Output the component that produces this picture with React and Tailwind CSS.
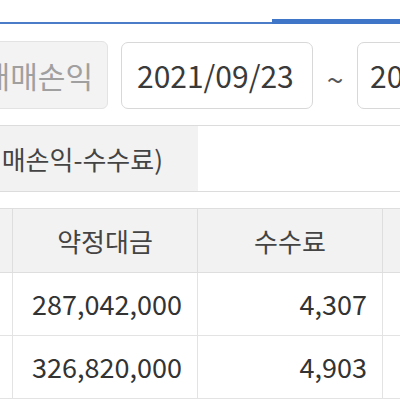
import React from "react";

const rows = [
  { amount: "287,042,000", fee: "4,307" },
  { amount: "326,820,000", fee: "4,903" },
];

const App = () => {
  return (
    <div
      className="w-[400px] h-[400px] overflow-hidden bg-white text-[#333]"
      style={{ fontFamily: '"Noto Sans CJK KR", "Noto Sans", sans-serif' }}
    >
      {/* Tabs */}
      <div className="flex h-[24px]">
        <div className="w-[272px] border-b-2 border-[#4a7cc8]" />
        <div className="flex-1 border-b-[5px] border-[#4076c7]" />
      </div>

      {/* Filter row */}
      <div className="mt-[17px] flex items-center h-[68px]">
        <button className="shrink-0 ml-[-40px] w-[148px] h-[68px] rounded-[6px] bg-[#f3f3f3] border border-[#e3e3e3] text-[30px] text-[#a0a0a0] flex items-center justify-end pr-[14px] whitespace-nowrap">
          매매손익
        </button>
        <div className="shrink-0 ml-[13px] w-[192px] h-[67px] rounded-[7px] border border-[#d8d8d8] flex items-center pl-[15px] text-[30px] text-[#3a3a3a]">
          2021/09/23
        </div>
        <div className="shrink-0 w-[44px] text-center text-[30px] leading-none pt-[6px] text-[#555]">~</div>
        <div className="shrink-0 w-[192px] h-[67px] rounded-[7px] border border-[#d8d8d8] flex items-center pl-[12px] text-[30px] text-[#3a3a3a]">
          2021/09/30
        </div>
      </div>

      {/* Formula row */}
      <div className="mt-[16px] flex h-[67px] border-y border-[#dcdcdc]">
        <div className="w-[198px] bg-[#f2f2f2] flex items-center justify-end pr-[35px] overflow-hidden whitespace-nowrap text-[26px] text-[#444]">
          (매매손익-수수료)
        </div>
        <div className="flex-1 bg-white" />
      </div>

      {/* Table */}
      <div className="mt-[16px] border-t border-[#dedede]">
        <div className="grid grid-cols-[13px_185px_185px_1fr] h-[64px] bg-[#f2f2f2] border-b border-[#dedede] text-[26px] text-[#444]">
          <div className="border-r border-[#dedede]" />
          <div className="border-r border-[#dedede] flex items-center justify-center">약정대금</div>
          <div className="border-r border-[#dedede] flex items-center justify-center">수수료</div>
          <div />
        </div>
        {rows.map((r, i) => (
          <div
            key={i}
            className="grid grid-cols-[13px_185px_185px_1fr] h-[63px] bg-white border-b border-[#e3e3e3] text-[27px] text-[#333]"
          >
            <div className="border-r border-[#e3e3e3]" />
            <div className="border-r border-[#e3e3e3] flex items-center justify-end pr-[15px]">{r.amount}</div>
            <div className="border-r border-[#e3e3e3] flex items-center justify-end pr-[15px]">{r.fee}</div>
            <div />
          </div>
        ))}
      </div>
    </div>
  );
};

export default App;
